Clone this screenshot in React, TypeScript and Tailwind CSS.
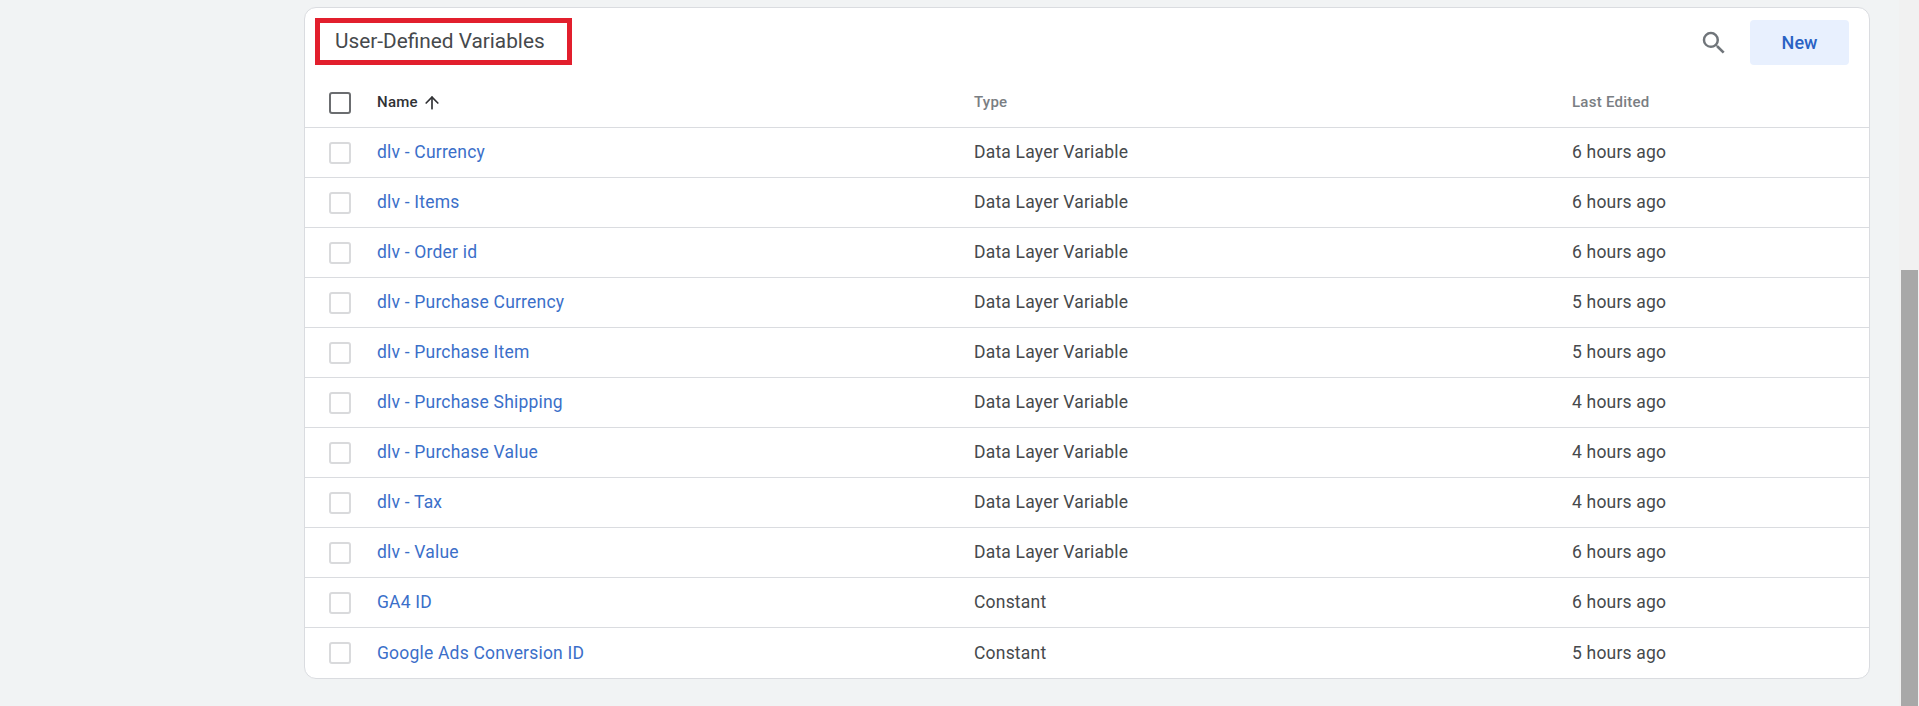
import { ArrowUp } from "lucide-react";

const rows = [
  ["dlv - Currency", "Data Layer Variable", "6 hours ago"],
  ["dlv - Items", "Data Layer Variable", "6 hours ago"],
  ["dlv - Order id", "Data Layer Variable", "6 hours ago"],
  ["dlv - Purchase Currency", "Data Layer Variable", "5 hours ago"],
  ["dlv - Purchase Item", "Data Layer Variable", "5 hours ago"],
  ["dlv - Purchase Shipping", "Data Layer Variable", "4 hours ago"],
  ["dlv - Purchase Value", "Data Layer Variable", "4 hours ago"],
  ["dlv - Tax", "Data Layer Variable", "4 hours ago"],
  ["dlv - Value", "Data Layer Variable", "6 hours ago"],
  ["GA4 ID", "Constant", "6 hours ago"],
  ["Google Ads Conversion ID", "Constant", "5 hours ago"],
];

export default function App() {
  return (
    <div className="flex h-[706px] overflow-hidden bg-[#f1f3f4] font-['Roboto',sans-serif]">
      <main className="flex-1 pl-[304px] pr-[29px] pt-[7px]">
        <section className="rounded-[12px] border border-[#dadce0] bg-white">
          <header className="flex h-[70px] items-start justify-between pl-[10px] pr-[20px] pt-[10px]">
            <div className="flex h-[47px] w-[257px] items-center border-[5px] border-[#e21f2d] pl-[15px]">
              <h2 className="text-[20.8px] text-[#46494c]">User-Defined Variables</h2>
            </div>
            <div className="flex items-center gap-[21px] pt-[2px]">
              <svg viewBox="0 0 24 24" className="h-[30px] w-[30px] fill-[#70757a]">
                <path d="M15.5 14h-.79l-.28-.27A6.47 6.47 0 0 0 16 9.5 6.5 6.5 0 1 0 9.5 16c1.61 0 3.09-.59 4.23-1.57l.27.28v.79l5 4.99L20.49 19l-4.99-5zm-6 0C7.01 14 5 11.99 5 9.5S7.01 5 9.5 5 14 7.01 14 9.5 11.99 14 9.5 14z" />
              </svg>
              <button className="h-[45px] w-[99px] rounded-[4px] bg-[#e8f0fe] text-[18px] font-medium text-[#2a62c4]">
                New
              </button>
            </div>
          </header>

          <div className="flex h-[50px] items-center border-b border-[#dadce0] pl-[24px] text-[15px] font-medium tracking-[0.25px] text-[#7a7e83]">
            <span className="h-[22px] w-[22px] rounded-[3px] border-[2px] border-[#6b6d70]" />
            <div className="ml-[26px] flex w-[597px] items-center gap-[4px] text-[#303134]">
              Name
              <ArrowUp className="h-[20px] w-[20px]" strokeWidth={2} />
            </div>
            <div className="w-[598px]">Type</div>
            <div>Last Edited</div>
          </div>

          {rows.map(([name, type, edited], i) => (
            <div
              key={name}
              className={`flex h-[50px] items-center pl-[24px] text-[17.5px] tracking-[0.2px] text-[#46494c] ${
                i < rows.length - 1 ? "border-b border-[#dadce0]" : ""
              }`}
            >
              <span className="h-[22px] w-[22px] rounded-[3px] border-[2px] border-[#d9dadc]" />
              <a className="ml-[26px] w-[597px] text-[#3b6fc9]">{name}</a>
              <div className="w-[598px]">{type}</div>
              <div>{edited}</div>
            </div>
          ))}
        </section>
      </main>

      <aside className="w-[20px] bg-[#f1f1f1] pl-[2px] pr-px pt-[270px]">
        <div className="h-full bg-[#a8a8a8]" />
      </aside>
    </div>
  );
}
